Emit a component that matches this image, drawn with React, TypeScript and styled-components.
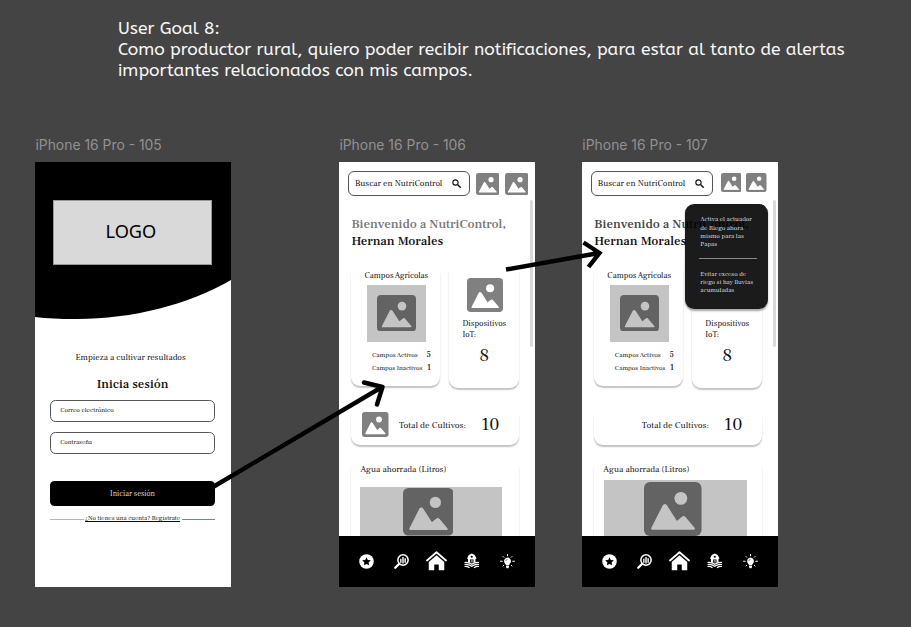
import React from 'react';
import styled, { createGlobalStyle } from 'styled-components';

const GlobalStyle = createGlobalStyle`
  * { box-sizing: border-box; }
  body { margin: 0; background: #444; }
  p, h1, h2 { margin: 0; font-weight: inherit; }
`;

const serif = '"Frank Ruhl Libre", "Liberation Serif", serif';

const Canvas = styled.main`
  position: relative;
  width: 911px;
  height: 627px;
  overflow: hidden;
  background: #444;
  font-family: ${serif};
  color: #111;
`;

const Goal = styled.h1`
  padding: 18px 0 0 118px;
  width: 870px;
  height: 137px;
  font: 400 17.5px/21px ABeeZee, "Noto Sans", sans-serif;
  color: #f7f7f7;
`;

const Board = styled.div`
  display: flex;
  padding-left: 35.4px;
`;

const FrameColumn = styled.section<{ $gap: number }>`
  flex: none;
  width: 195.4px;
  margin-right: ${p => p.$gap}px;
`;

const FrameLabel = styled.h2`
  height: 25.4px;
  font: 400 13.9px/17px Inter, sans-serif;
  color: #919191;
  white-space: nowrap;
`;

const Phone = styled.div`
  position: relative;
  display: flex;
  flex-direction: column;
  height: 424.5px;
  background: #fff;
  overflow: hidden;
`;

const Text = styled.p<{ $size: number; $line?: number; $weight?: number; $color?: string }>`
  font-size: ${p => p.$size}px;
  line-height: ${p => p.$line ?? 12}px;
  font-weight: ${p => p.$weight ?? 400};
  color: ${p => p.$color ?? '#111'};
  white-space: nowrap;
`;

/* Login */

const Hero = styled.div`
  display: grid;
  height: 158px;
`;

const HeroShape = styled.svg`
  grid-area: 1 / 1;
  width: 196px;
  height: 158px;
`;

const Logo = styled.div`
  grid-area: 1 / 1;
  display: flex;
  align-items: center;
  justify-content: center;
  width: 159px;
  height: 64.5px;
  margin: 38px 0 0 18px;
  padding: 0 4px 3px 0;
  border: 1px solid #999;
  background: #d9d9d9;
  font: 400 18.2px/20px "Noto Sans", sans-serif;
  color: #000;
`;

const LoginForm = styled.div`
  display: flex;
  flex-direction: column;
  align-items: center;
  padding: 31.5px 16px 0 15px;
`;

const Tagline = styled(Text)`
  margin-right: 4px;
`;

const LoginTitle = styled(Text)`
  margin-top: 12px;
`;

const Field = styled.div`
  display: flex;
  align-items: center;
  width: 164.5px;
  height: 21.5px;
  padding: 0 0 1.5px 9px;
  border: 1px solid #555;
  border-radius: 5.5px;
`;

const FieldStack = styled.div`
  display: flex;
  flex-direction: column;
  gap: 10.5px;
  margin-top: 7.5px;
`;

const SubmitButton = styled.div`
  display: flex;
  align-items: center;
  justify-content: center;
  width: 164.5px;
  height: 25px;
  margin-top: 27.5px;
  border-radius: 4.5px;
  background: #000;
`;

const SignUp = styled.div`
  display: flex;
  align-items: center;
  gap: 1.5px;
  width: 164.5px;
  margin-top: 6px;
`;

const SignUpLink = styled(Text)`
  text-decoration: underline;
  text-decoration-thickness: 0.6px;
  text-underline-offset: 1px;
`;

const Rule = styled.span<{ $soft?: boolean }>`
  flex: 1;
  height: 1px;
  margin-top: 2px;
  background: ${p => (p.$soft ? '#a5bdb4' : '#6d8f83')};
`;

/* Dashboard */

const TopBar = styled.header<{ $gap: number }>`
  display: flex;
  align-items: flex-start;
  height: 44.5px;
  padding: 9px 0 0 9px;
  gap: ${p => p.$gap}px;
`;

const SearchBox = styled.div`
  display: flex;
  align-items: center;
  justify-content: space-between;
  width: 121.5px;
  height: 24.5px;
  padding: 0 7px 0 5.5px;
  border: 1px solid #555;
  border-radius: 6px;
`;

const TopIcons = styled.div<{ $gap: number }>`
  display: flex;
  gap: ${p => p.$gap}px;
  margin-top: 1.5px;
`;

const Content = styled.div`
  flex: 1;
  min-height: 0;
  overflow: hidden;
  padding: 9.3px 0 0 12px;
`;

const CardRow = styled.div`
  display: flex;
  align-items: flex-start;
  gap: 9px;
  height: 123px;
  margin-top: 15px;
`;

const Card = styled.div<{ $w: number; $h: number }>`
  width: ${p => p.$w}px;
  height: ${p => p.$h}px;
  border-radius: 9px;
  background: #fff;
  box-shadow: 0 2px 1.5px rgba(0, 0, 0, 0.24);
`;

const FieldsCard = styled(Card)`
  padding: 4.5px 9.5px 0 13px;
`;

const DevicesCard = styled(Card)`
  padding: 12.5px 0 0 13px;
`;

const DeviceIcon = styled.div`
  width: 40.5px;
  height: 34px;
  padding-left: 4.5px;
`;

const TotalCard = styled(Card)`
  display: flex;
  align-items: center;
  margin-top: 19.5px;
  padding: 0 0 2.5px 11px;
`;

const WaterCard = styled(Card)`
  margin-top: 15px;
  padding: 4.5px 0 0 9px;
`;

const Picture = styled.div<{ $w: number; $h: number; $x: number; $y: number; $top: number }>`
  display: flex;
  align-items: flex-start;
  justify-content: center;
  width: ${p => p.$w}px;
  height: ${p => p.$h}px;
  margin: ${p => p.$y}px 0 0 ${p => p.$x}px;
  padding-top: ${p => p.$top}px;
  background: #c4c4c4;
`;

const WideIcon = styled.div<{ $shift: number }>`
  margin-left: ${p => p.$shift}px;
`;

const Stat = styled.div`
  display: flex;
  justify-content: space-between;
  height: 13px;
  margin-left: 7.5px;
`;

const Counts = styled.div`
  margin-top: 7px;
`;

const Devices = styled.div`
  margin-top: 6.5px;
`;

const DeviceCount = styled.div`
  display: flex;
  justify-content: center;
  width: 44px;
  margin-top: 6px;
`;

const TotalLabel = styled.div`
  width: 82px;
  margin-left: 10px;
`;

const IconSpace = styled.div`
  width: 26.5px;
  height: 25px;
`;

const Nav = styled.nav`
  display: grid;
  grid-template-columns: repeat(5, 35.4px);
  place-items: center;
  height: 51.4px;
  padding-left: 9px;
  background: #000;
`;

const Scrollbar = styled.div`
  position: absolute;
  top: 37.5px;
  left: 190.5px;
  width: 3.5px;
  height: 147.5px;
  border-radius: 2px;
  background: #d9d9d9;
`;

const Popup = styled.aside`
  position: absolute;
  top: 41.5px;
  left: 102.5px;
  width: 83px;
  height: 105.5px;
  padding: 11.5px 10px 0 15.5px;
  border-radius: 9px;
  background: rgba(0, 0, 0, 0.895);
  box-shadow: 0 1.5px 2px rgba(0, 0, 0, 0.35);
`;

const PopupRule = styled.div`
  width: 57.5px;
  height: 1px;
  margin: 9.5px 0 10.5px -1px;
  background: #8a8a8a;
`;

const Arrows = styled.svg`
  position: absolute;
  inset: 0;
  pointer-events: none;
`;

const Icon = styled.svg`
  display: block;
  flex: none;
`;

function ImageIcon({ w, h, back = '#808080', front = '#fff' }: { w: number; h: number; back?: string; front?: string }) {
  return (
    <Icon width={w} height={h} viewBox="0 0 117 109" preserveAspectRatio="none">
      <rect width="117" height="109" rx="12" fill={back} />
      <circle cx="75" cy="33" r="13" fill={front} />
      <path d="M17 94 40 49Q42 45 45 49L65 80Q67 82 69 80L79 72Q81 70 83 73L101 94Z" fill={front} stroke={front} strokeWidth="5" strokeLinejoin="round" />
    </Icon>
  );
}

function SearchIcon() {
  return (
    <Icon width="9.5" height="9.5" viewBox="0 0 19 19" fill="none" stroke="#111">
      <circle cx="7" cy="7" r="5.3" strokeWidth="2.2" />
      <path d="m11 11 6.5 6.5" strokeWidth="2.8" />
    </Icon>
  );
}

function StarIcon() {
  return (
    <Icon width="15" height="15" viewBox="0 0 30 30">
      <circle cx="15" cy="15" r="14.5" fill="#fff" />
      <path d="m15 6.5 2.6 5.4 6 .8-4.4 4.1 1.1 5.9-5.3-2.9-5.3 2.9 1.1-5.9-4.4-4.1 6-.8z" fill="#000" />
    </Icon>
  );
}

function ChartSearchIcon() {
  return (
    <Icon width="15" height="15" viewBox="0 0 30 30" fill="none" stroke="#fff">
      <circle cx="18" cy="12" r="10.3" strokeWidth="3" />
      <path d="m10 20-7.5 7.500" strokeWidth="4.5" strokeLinecap="round" />
      <path d="M13.700 9.500v8M18 6v13M22.300 8.500v9" strokeWidth="2.800" />
    </Icon>
  );
}

function HomeIcon() {
  return (
    <Icon width="21" height="21" viewBox="0 0 42 42">
      <path d="m2 19 19-16.500 19 16.500" fill="none" stroke="#fff" strokeWidth="3.600" strokeLinecap="round" strokeLinejoin="round" />
      <path d="m21 8.500 15.500 13.500v16.500H25.500V27h-9v11.500H5.500V22z" fill="#fff" />
    </Icon>
  );
}

function FarmIcon() {
  return (
    <Icon width="15.5" height="15.5" viewBox="0 0 31 31">
      <path d="M6 11 9.500 4 15.500 1l6 3L25 11l-2 1v7H8v-7z" fill="#fff" />
      <circle cx="15.500" cy="7.500" r="2.200" fill="#000" />
      <path d="M12 19v-6h7v6z" fill="#000" />
      <path d="m13.500 14 4 4m0-4-4 4" stroke="#fff" strokeWidth="1.200" />
      <path d="M1 19q8-1 14.500 3.500Q22 18 30 19M1 23q8-1 14.500 3.500Q22 22 30 23M1 27q6-.5 10 2.500M30 27q-6-.5-10 2.500" fill="none" stroke="#fff" strokeWidth="2.500" />
    </Icon>
  );
}

function BulbIcon() {
  return (
    <Icon width="15" height="15" viewBox="0 0 30 30">
      <path d="M15 7a7.200 7.200 0 0 0-4.700 12.300q1.500 1.500 1.700 3.300h6q.2-1.800 1.700-3.300A7.200 7.200 0 0 0 15 7zM12 23.500h6v3l-1.500 2h-3L12 26.500z" fill="#fff" />
      <path d="M15 1v2.500M6 5l1.500 1.500M24 5l-1.500 1.500M1 14.500h3.500M25.500 14.500h3.500M6 24l1.500-1.500M24 24l-1.500-1.500" stroke="#fff" strokeWidth="2" strokeLinecap="round" />
      <path d="M11.500 14q.5-3 3.500-3.500" fill="none" stroke="#000" strokeWidth="1" />
    </Icon>
  );
}

function Login() {
  return (
    <Phone>
      <Hero>
        <HeroShape viewBox="0 0 195 158" preserveAspectRatio="none">
          <path d="M0 0H195V118C152 143 95 157.500 39 157Q18 157 0 155Z" fill="#000" />
        </HeroShape>
        <Logo>LOGO</Logo>
      </Hero>
      <LoginForm>
        <Tagline $size={8.65}>Empieza a cultivar resultados</Tagline>
        <LoginTitle $size={12.6} $line={17} $weight={500}>Inicia sesión</LoginTitle>
        <FieldStack>
          <Field><Text $size={6.65}>Correo electrónico</Text></Field>
          <Field><Text $size={6.45}>Contraseña</Text></Field>
        </FieldStack>
        <SubmitButton><Text $size={7.6} $color="#ddd">Iniciar sesión</Text></SubmitButton>
        <SignUp>
          <Rule $soft />
          <SignUpLink $size={6.5}>¿No tienes una cuenta? Regístrate</SignUpLink>
          <Rule />
        </SignUp>
      </LoginForm>
    </Phone>
  );
}

function Dashboard({ alerts = false }: { alerts?: boolean }) {
  const iconWidth = alerts ? 20.5 : 23.5;
  const iconHeight = alerts ? 19 : 22;
  return (
    <Phone>
      <TopBar $gap={alerts ? 8 : 6}>
        <SearchBox>
          <Text $size={8.7}>Buscar en NutriControl</Text>
          <SearchIcon />
        </SearchBox>
        <TopIcons $gap={alerts ? 5 : 5.5}>
          <ImageIcon w={iconWidth} h={iconHeight} />
          <ImageIcon w={iconWidth} h={iconHeight} />
        </TopIcons>
      </TopBar>
      <Content>
        <Text $size={12.75} $line={17} $weight={500} $color={alerts ? '#444' : '#777'}>Bienvenido a NutriControl,</Text>
        <Text $size={12.75} $line={17} $weight={500}>Hernan Morales</Text>
        <CardRow>
          <FieldsCard $w={89} $h={121}>
            <Text $size={8.25}>Campos Agrícolas</Text>
            <Picture $w={59} $h={57} $x={2.5} $y={3} $top={10}>
              <ImageIcon w={39} h={36.5} back="#636363" front="#c4c4c4" />
            </Picture>
            <Counts>
              <Stat><Text $size={6.75}>Campos Activos</Text><Text $size={8} $weight={500}>5</Text></Stat>
              <Stat><Text $size={6.6}>Campos Inactivos</Text><Text $size={8} $weight={500}>1</Text></Stat>
            </Counts>
          </FieldsCard>
          <DevicesCard $w={70} $h={123}>
            <DeviceIcon>{!alerts && <ImageIcon w={36} h={34} />}</DeviceIcon>
            <Devices>
              <Text $size={8.25} $line={11}>Dispositivos</Text>
              <Text $size={8.25} $line={11}>IoT:</Text>
            </Devices>
            <DeviceCount><Text $size={18} $line={20}>8</Text></DeviceCount>
          </DevicesCard>
        </CardRow>
        <TotalCard $w={168} $h={37}>
          {alerts ? <IconSpace /> : <ImageIcon w={26.5} h={25} />}
          <TotalLabel><Text $size={9}>Total de Cultivos:</Text></TotalLabel>
          <Text $size={18} $line={20}>10</Text>
        </TotalCard>
        <WaterCard $w={168} $h={110}>
          <Text $size={8.75}>Agua ahorrada (Litros)</Text>
          {alerts ? (
            <Picture $w={142.5} $h={70} $x={1} $y={4} $top={1.5}>
              <WideIcon $shift={-5}><ImageIcon w={57.5} h={54} back="#636363" front="#c4c4c4" /></WideIcon>
            </Picture>
          ) : (
            <Picture $w={142} $h={70} $x={0} $y={11} $top={1}>
              <WideIcon $shift={-7}><ImageIcon w={50.5} h={47.5} back="#636363" front="#c4c4c4" /></WideIcon>
            </Picture>
          )}
        </WaterCard>
      </Content>
      <Nav>
        <StarIcon />
        <ChartSearchIcon />
        <HomeIcon />
        <FarmIcon />
        <BulbIcon />
      </Nav>
      <Scrollbar />
      {alerts && (
        <Popup>
          {['Activa el actuador', 'de Riego ahora', 'mismo para las', 'Papas'].map(line => (
            <Text key={line} $size={6.65} $line={8.3} $color="#dcdcdc">{line}</Text>
          ))}
          <PopupRule />
          {['Evitar exceso de', 'riego si hay lluvias', 'acumuladas'].map(line => (
            <Text key={line} $size={6.5} $line={8.3} $color="#dcdcdc">{line}</Text>
          ))}
        </Popup>
      )}
    </Phone>
  );
}

export default function App() {
  return (
    <Canvas>
      <GlobalStyle />
      <Goal>
        User Goal 8:<br />
        Como productor rural, quiero poder recibir notificaciones, para estar al tanto de alertas<br />
        importantes relacionados con mis campos.
      </Goal>
      <Board>
        <FrameColumn $gap={108.6}>
          <FrameLabel>iPhone 16 Pro - 105</FrameLabel>
          <Login />
        </FrameColumn>
        <FrameColumn $gap={47.6}>
          <FrameLabel>iPhone 16 Pro - 106</FrameLabel>
          <Dashboard />
        </FrameColumn>
        <FrameColumn $gap={0}>
          <FrameLabel>iPhone 16 Pro - 107</FrameLabel>
          <Dashboard alerts />
        </FrameColumn>
      </Board>
      <Arrows width="911" height="627" fill="none" stroke="#000" strokeWidth="4.4">
        <path d="M213 487 382 387M364 382.500 382.500 387 377 404.500" strokeLinejoin="round" strokeLinecap="round" />
        <path d="M506 269.500 599 253M583.500 242.500 599.500 253 588.500 267" />
      </Arrows>
    </Canvas>
  );
}
